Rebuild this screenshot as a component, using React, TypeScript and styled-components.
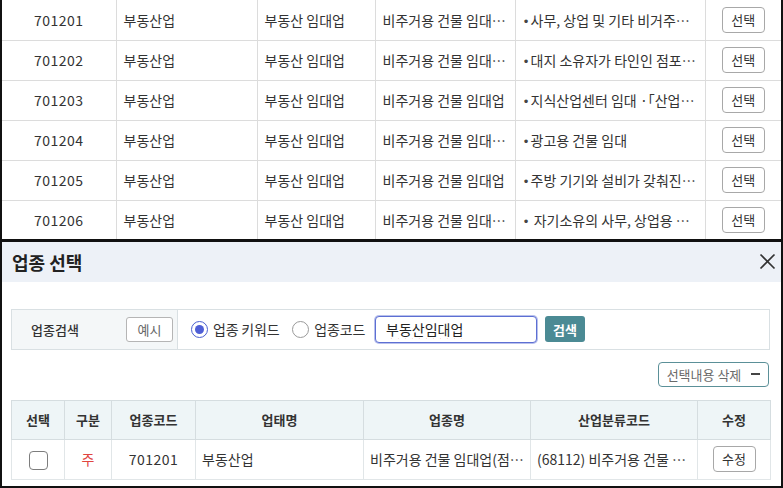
import React, { useState } from "react";
import styled, { createGlobalStyle } from "styled-components";

const GlobalStyle = createGlobalStyle`
  html, body {
    margin: 0;
    padding: 0;
    background: #ffffff;
  }
  body {
    font-family: "Noto Sans CJK KR", "Noto Sans", sans-serif;
    color: #333;
  }
  * {
    box-sizing: border-box;
  }
`;

interface IndustryRow {
  code: string;
  category: string;
  business: string;
  type: string;
  note: string;
}

const rows: IndustryRow[] = [
  {
    code: "701201",
    category: "부동산업",
    business: "부동산 임대업",
    type: "비주거용 건물 임대업(점포, 자기땅)",
    note: "사무, 상업 및 기타 비거주용 건물 임대",
  },
  {
    code: "701202",
    category: "부동산업",
    business: "부동산 임대업",
    type: "비주거용 건물 임대업(점포, 타인땅)",
    note: "대지 소유자가 타인인 점포 임대",
  },
  {
    code: "701203",
    category: "부동산업",
    business: "부동산 임대업",
    type: "비주거용 건물 임대업",
    note: "지식산업센터 임대 ·「산업집적활성화 및 공장설립에 관한 법률」",
  },
  {
    code: "701204",
    category: "부동산업",
    business: "부동산 임대업",
    type: "비주거용 건물 임대업(광고용)",
    note: "광고용 건물 임대",
  },
  {
    code: "701205",
    category: "부동산업",
    business: "부동산 임대업",
    type: "비주거용 건물 임대업",
    note: "주방 기기와 설비가 갖춰진 공유주방 임대",
  },
  {
    code: "701206",
    category: "부동산업",
    business: "부동산 임대업",
    type: "비주거용 건물 임대업(오피스텔)",
    note: " 자기소유의 사무, 상업용 공간 임대",
  },
];

const Frame = styled.div`
  width: 783px;
  height: 488px;
  border-left: 2px solid #111;
  border-right: 2px solid #111;
  border-bottom: 2px solid #111;
  overflow: hidden;
  display: flex;
  flex-direction: column;
`;

const ResultTable = styled.table`
  width: 100%;
  table-layout: fixed;
  border-collapse: collapse;
  border-bottom: 3px solid #111;
  font-size: 14px;
`;

const ResultCell = styled.td<{ $center?: boolean }>`
  height: 40px;
  padding: 0 7px;
  border-left: 1px solid #dcdcdc;
  border-top: 1px solid #dcdcdc;
  text-align: ${({ $center }) => ($center ? "center" : "left")};
  white-space: pre;
  overflow: hidden;
  text-overflow: ellipsis;
  color: #333;
  tr:first-child > & {
    border-top: none;
  }
  &:first-child {
    border-left: none;
  }
`;

const CodeText = styled.span`
  letter-spacing: 0.5px;
`;

const Bullet = styled.span`
  font-family: "DejaVu Sans", sans-serif;
  font-size: 12px;
  color: #444;
  margin-right: 1px;
`;

const SmallButton = styled.button`
  font-family: inherit;
  font-size: 13px;
  color: #333;
  background: #fff;
  border: 1px solid #a8a8a8;
  border-radius: 4px;
  width: 43px;
  height: 26px;
  padding: 0;
  line-height: 24px;
  cursor: pointer;
`;

const Modal = styled.section`
  flex: 1;
  display: flex;
  flex-direction: column;
`;

const ModalHeader = styled.header`
  height: 40px;
  background: #edf1f7;
  display: flex;
  align-items: center;
  justify-content: space-between;
  padding: 0 3px 0 10px;
`;

const ModalTitle = styled.h2`
  margin: 0;
  font-size: 18px;
  font-weight: 700;
  color: #222;
`;

const CloseButton = styled.button`
  border: none;
  background: none;
  padding: 0;
  width: 22px;
  height: 22px;
  display: flex;
  align-items: center;
  justify-content: center;
  cursor: pointer;
`;

const ModalBody = styled.div`
  padding: 27px 11px 0 9px;
  display: flex;
  flex-direction: column;
`;

const SearchBox = styled.div`
  height: 41px;
  border: 1px solid #d9e0e3;
  display: flex;
`;

const SearchLabelCell = styled.div`
  width: 166px;
  background: #f4f7f8;
  border-right: 1px solid #d9e0e3;
  display: flex;
  align-items: center;
  justify-content: space-between;
  padding: 0 4px 0 19px;
  font-size: 13px;
  font-weight: 500;
  color: #333;
`;

const ExampleButton = styled.button`
  font-family: inherit;
  font-size: 13px;
  color: #666;
  background: #fff;
  border: 1px solid #b5b5b5;
  border-radius: 3px;
  width: 47px;
  height: 25px;
  padding: 0;
  cursor: pointer;
`;

const SearchFieldCell = styled.div`
  flex: 1;
  display: flex;
  align-items: center;
  padding-left: 13px;
  background: #fff;
`;

const RadioLabel = styled.label<{ $gapAfter: number }>`
  display: flex;
  align-items: center;
  gap: 5px;
  font-size: 14px;
  letter-spacing: -0.2px;
  color: #333;
  margin-right: ${({ $gapAfter }) => $gapAfter}px;
  cursor: pointer;
`;

const RadioDot = styled.span<{ $checked: boolean }>`
  width: 17px;
  height: 17px;
  border-radius: 50%;
  border: 1px solid ${({ $checked }) => ($checked ? "#4a5fd0" : "#9a9a9a")};
  background: #fff;
  display: flex;
  align-items: center;
  justify-content: center;
  &::after {
    content: "";
    width: 9px;
    height: 9px;
    border-radius: 50%;
    background: ${({ $checked }) => ($checked ? "#4f5fd6" : "transparent")};
  }
`;

const KeywordInput = styled.input`
  width: 162px;
  height: 27px;
  border: 1px solid #5d6fd3;
  box-shadow: 0 0 0 1px #b8c0ec;
  border-radius: 4px;
  padding: 0 10px;
  font-family: inherit;
  font-size: 14px;
  color: #222;
  outline: none;
  text-decoration: underline wavy #e0504a;
  text-decoration-thickness: 1px;
  text-underline-offset: 3px;
`;

const SearchButton = styled.button`
  margin-left: 8px;
  width: 40px;
  height: 26px;
  border: none;
  border-radius: 3px;
  background: #4b8a94;
  color: #fff;
  font-family: inherit;
  font-size: 13px;
  font-weight: 700;
  padding: 0;
  cursor: pointer;
`;

const ActionBar = styled.div`
  display: flex;
  justify-content: flex-end;
  padding: 12px 1px 13px 0;
`;

const DeleteButton = styled.button`
  height: 25px;
  width: 111px;
  border: 1px solid #5b9098;
  border-radius: 4px;
  background: #fff;
  font-family: inherit;
  font-size: 13px;
  color: #6a6a6a;
  display: flex;
  align-items: center;
  justify-content: center;
  gap: 10px;
  padding: 0;
  cursor: pointer;
`;

const Dash = styled.span`
  width: 9px;
  height: 2px;
  background: #444;
`;

const SelectedTable = styled.table`
  width: 759px;
  table-layout: fixed;
  border-collapse: collapse;
  font-size: 14px;
  border: 1px solid #d5dde0;
`;

const HeadCell = styled.th`
  height: 39px;
  background: #eef5f7;
  border: 1px solid #d5dde0;
  font-weight: 700;
  font-size: 13px;
  color: #333;
  text-align: center;
  padding: 0;
`;

const BodyCell = styled.td<{ $align?: "left" | "center"; $tone?: "red" }>`
  height: 40px;
  border: 1px solid #e1e6e8;
  text-align: ${({ $align }) => $align ?? "center"};
  padding: 0 6px;
  white-space: nowrap;
  overflow: hidden;
  text-overflow: ellipsis;
  color: ${({ $tone }) => ($tone === "red" ? "#e0463f" : "#333")};
`;

const CheckBox = styled.span`
  display: inline-block;
  width: 19px;
  height: 19px;
  border: 1px solid #7d7d7d;
  border-radius: 4px;
  background: #fff;
  vertical-align: middle;
`;

const CloseIcon = () => (
  <svg width="17" height="17" viewBox="0 0 17 17">
    <path d="M1.5 1.5 L15.5 15.5 M15.5 1.5 L1.5 15.5" stroke="#333" strokeWidth="1.7" />
  </svg>
);

const App: React.FC = () => {
  const [mode, setMode] = useState<"keyword" | "code">("keyword");
  const [keyword, setKeyword] = useState("부동산임대업");

  return (
    <>
      <GlobalStyle />
      <Frame>
        <ResultTable>
          <colgroup>
            <col style={{ width: 114 }} />
            <col style={{ width: 141 }} />
            <col style={{ width: 118 }} />
            <col style={{ width: 140 }} />
            <col style={{ width: 190 }} />
            <col />
          </colgroup>
          <tbody>
            {rows.map((row) => (
              <tr key={row.code}>
                <ResultCell $center>
                  <CodeText>{row.code}</CodeText>
                </ResultCell>
                <ResultCell>{row.category}</ResultCell>
                <ResultCell>{row.business}</ResultCell>
                <ResultCell>{row.type}</ResultCell>
                <ResultCell>
                  <Bullet>•</Bullet>
                  {row.note}
                </ResultCell>
                <ResultCell $center>
                  <SmallButton>선택</SmallButton>
                </ResultCell>
              </tr>
            ))}
          </tbody>
        </ResultTable>

        <Modal>
          <ModalHeader>
            <ModalTitle>업종 선택</ModalTitle>
            <CloseButton aria-label="닫기">
              <CloseIcon />
            </CloseButton>
          </ModalHeader>
          <ModalBody>
            <SearchBox>
              <SearchLabelCell>
                업종검색
                <ExampleButton>예시</ExampleButton>
              </SearchLabelCell>
              <SearchFieldCell>
                <RadioLabel $gapAfter={13} onClick={() => setMode("keyword")}>
                  <RadioDot $checked={mode === "keyword"} />
                  업종 키워드
                </RadioLabel>
                <RadioLabel $gapAfter={10} onClick={() => setMode("code")}>
                  <RadioDot $checked={mode === "code"} />
                  업종코드
                </RadioLabel>
                <KeywordInput value={keyword} onChange={(e) => setKeyword(e.target.value)} />
                <SearchButton>검색</SearchButton>
              </SearchFieldCell>
            </SearchBox>

            <ActionBar>
              <DeleteButton>
                선택내용 삭제
                <Dash />
              </DeleteButton>
            </ActionBar>

            <SelectedTable>
              <colgroup>
                <col style={{ width: 53 }} />
                <col style={{ width: 47 }} />
                <col style={{ width: 84 }} />
                <col style={{ width: 168 }} />
                <col style={{ width: 167 }} />
                <col style={{ width: 167 }} />
                <col style={{ width: 73 }} />
              </colgroup>
              <thead>
                <tr>
                  <HeadCell>선택</HeadCell>
                  <HeadCell>구분</HeadCell>
                  <HeadCell>업종코드</HeadCell>
                  <HeadCell>업태명</HeadCell>
                  <HeadCell>업종명</HeadCell>
                  <HeadCell>산업분류코드</HeadCell>
                  <HeadCell>수정</HeadCell>
                </tr>
              </thead>
              <tbody>
                <tr>
                  <BodyCell>
                    <CheckBox />
                  </BodyCell>
                  <BodyCell $tone="red">주</BodyCell>
                  <BodyCell>
                    <CodeText>701201</CodeText>
                  </BodyCell>
                  <BodyCell $align="left">부동산업</BodyCell>
                  <BodyCell $align="left">비주거용 건물 임대업(점포, 자기땅)</BodyCell>
                  <BodyCell $align="left">(68112) 비주거용 건물 임대업</BodyCell>
                  <BodyCell>
                    <SmallButton>수정</SmallButton>
                  </BodyCell>
                </tr>
              </tbody>
            </SelectedTable>
          </ModalBody>
        </Modal>
      </Frame>
    </>
  );
};

export default App;
